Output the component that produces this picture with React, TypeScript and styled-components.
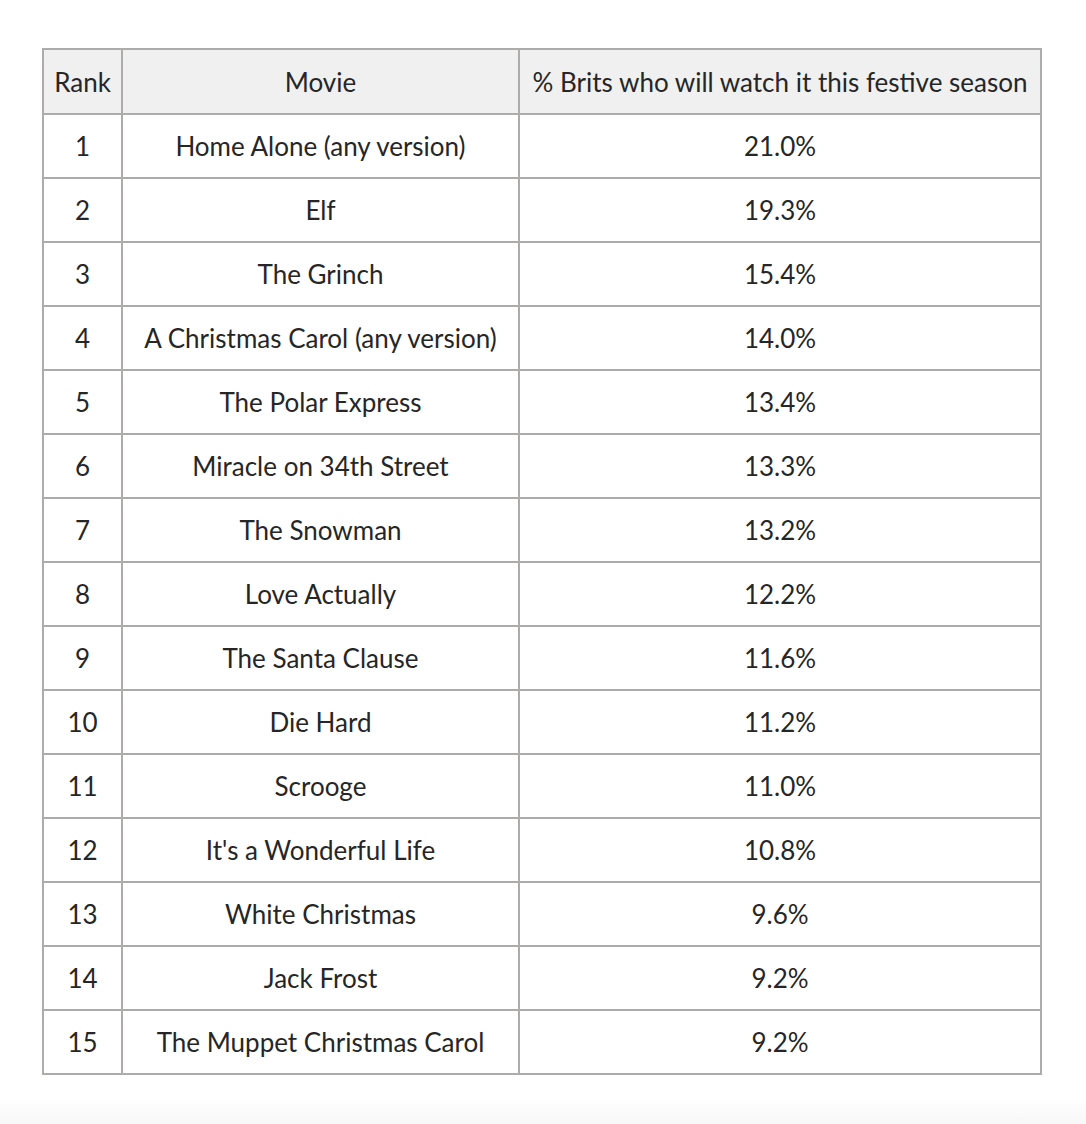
import styled, { createGlobalStyle } from "styled-components";

const GlobalStyle = createGlobalStyle`
    body {
        margin: 0;
        background: #fff;
        font-family: "Lato", "Noto Sans", sans-serif;
        color: #262626;
    }
`;

type Row = { rank: number; movie: string; share: string };

const rows: Row[] = [
    { rank: 1, movie: "Home Alone (any version)", share: "21.0%" },
    { rank: 2, movie: "Elf", share: "19.3%" },
    { rank: 3, movie: "The Grinch", share: "15.4%" },
    { rank: 4, movie: "A Christmas Carol (any version)", share: "14.0%" },
    { rank: 5, movie: "The Polar Express", share: "13.4%" },
    { rank: 6, movie: "Miracle on 34th Street", share: "13.3%" },
    { rank: 7, movie: "The Snowman", share: "13.2%" },
    { rank: 8, movie: "Love Actually", share: "12.2%" },
    { rank: 9, movie: "The Santa Clause", share: "11.6%" },
    { rank: 10, movie: "Die Hard", share: "11.2%" },
    { rank: 11, movie: "Scrooge", share: "11.0%" },
    { rank: 12, movie: "It's a Wonderful Life", share: "10.8%" },
    { rank: 13, movie: "White Christmas", share: "9.6%" },
    { rank: 14, movie: "Jack Frost", share: "9.2%" },
    { rank: 15, movie: "The Muppet Christmas Carol", share: "9.2%" },
];

const Page = styled.div`
    padding: 48px 0 0 42px;
    min-height: 1124px;
    box-sizing: border-box;
    background: linear-gradient(to bottom, #fff 0, #fff 1098px, #f7f7f7 1124px);
`;

const Table = styled.table`
    width: 998px;
    table-layout: fixed;
    border-collapse: collapse;
    font-size: 26px;
`;

const HeadCell = styled.th<{ $w: number }>`
    width: ${(p) => p.$w}px;
    height: 63px;
    padding: 0;
    background: #f0f0f0;
    border: 2px solid #aeabab;
    font-weight: normal;
    text-align: center;
    white-space: nowrap;
`;

const Cell = styled.td`
    height: 62px;
    padding: 0;
    border: 2px solid #aeabab;
    text-align: center;
    white-space: nowrap;
`;

export default function App() {
    return (
        <>
            <GlobalStyle />
            <Page>
                <Table>
                    <thead>
                        <tr>
                            <HeadCell $w={77}>Rank</HeadCell>
                            <HeadCell $w={395}>Movie</HeadCell>
                            <HeadCell $w={520}>% Brits who will watch it this festive season</HeadCell>
                        </tr>
                    </thead>
                    <tbody>
                        {rows.map((r) => (
                            <tr key={r.rank}>
                                <Cell>{r.rank}</Cell>
                                <Cell>{r.movie}</Cell>
                                <Cell>{r.share}</Cell>
                            </tr>
                        ))}
                    </tbody>
                </Table>
            </Page>
        </>
    );
}
